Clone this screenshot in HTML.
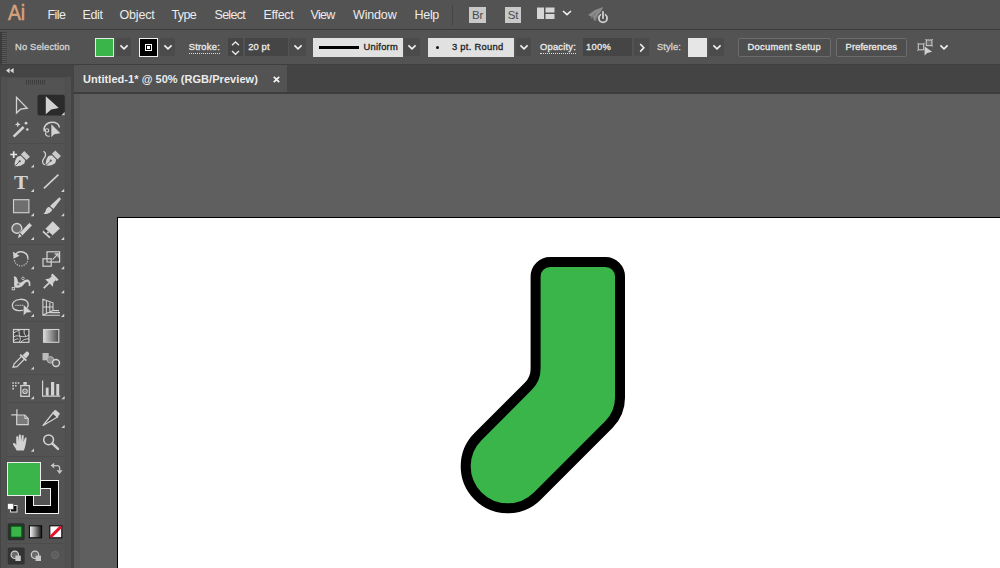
<!DOCTYPE html>
<html><head><meta charset="utf-8"><title>Untitled-1</title>
<style>
*{box-sizing:border-box;margin:0;padding:0}
html,body{width:1000px;height:568px;overflow:hidden;background:#5e5e5e;font-family:"Liberation Sans","DejaVu Sans",sans-serif;color:#e6e6e6}
.abs{position:absolute}
#menubar{position:absolute;left:0;top:0;width:1000px;height:30px;background:#535353;border-bottom:1px solid #3c3c3c}
#menubar .mi{position:absolute;top:6.6px;font-size:12.5px;line-height:16px;color:#ececec;white-space:nowrap}
#ctrl{position:absolute;left:0;top:30px;width:1000px;height:35px;background:#535353;border-bottom:1px solid #3f3f3f}
#ctrl .t{position:absolute;font-size:9.4px;line-height:12px;top:11px;white-space:nowrap;color:#ececec;-webkit-text-stroke:0.3px}
#ctrl .dk{position:absolute;top:8px;height:18px;background:#454545}
#ctrl .dd{position:absolute;top:8px;height:18px;background:#4b4b4b}
#ctrl .lt{position:absolute;top:8px;height:19px;background:#e1e1e1}
#ctrl .btn{position:absolute;top:8px;height:19px;background:#4e4e4e;border:1px solid #6c6c6c;border-radius:2px}
#tabrow{position:absolute;left:74px;top:65px;width:926px;height:29px;background:#444;border-bottom:2px solid #3d3d3d}
#tab{position:absolute;left:0;top:0;width:213px;height:27px;background:#535353}
#tools{position:absolute;left:0;top:65px;width:74px;height:503px;background:#535353;border-right:3px solid #444}
#toolhead{position:absolute;left:0;top:0;width:71px;height:12px;background:#454545}
#frame{position:absolute;left:74px;top:92px;width:6px;height:476px;background:#5a5a5a}
#paste{position:absolute;left:80px;top:94px;width:920px;height:474px;background:#5f5f5f}
#art{position:absolute;left:117px;top:217px;width:900px;height:400px;background:#fff;border:1px solid #000}
</style></head>
<body>
<div id="paste"></div>
<div id="frame"></div>
<div id="art"></div>
<svg class="abs" style="left:0;top:0" width="1000" height="568" viewBox="0 0 1000 568"><path d="M550.1 262 H605.5 A14.5 14.5 0 0 1 620 276.5 V397.7 A38 38 0 0 1 608.9 424.5 L537.4 496 A42 42 0 0 1 478 436.6 L528.3 386.3 A25 25 0 0 0 535.6 368.6 V276.5 A14.5 14.5 0 0 1 550.1 262 Z" fill="#39b54a" stroke="#000" stroke-width="10" stroke-linejoin="round"/></svg>
<div id="menubar">
<div class="mi" style="left:8.3px;top:1.2px;font-size:21.5px;line-height:24px;color:#d9a27a;-webkit-text-stroke:0.5px #d9a27a;transform:scaleX(0.9);transform-origin:0 0;letter-spacing:-0.3px">Ai</div>
<div class="mi" style="left:47.5px;letter-spacing:-0.54px">File</div>
<div class="mi" style="left:82.5px;letter-spacing:-0.39px">Edit</div>
<div class="mi" style="left:119.5px;letter-spacing:-0.19px">Object</div>
<div class="mi" style="left:171.5px;letter-spacing:-0.65px">Type</div>
<div class="mi" style="left:214.5px;letter-spacing:-0.71px">Select</div>
<div class="mi" style="left:263.5px;letter-spacing:-0.29px">Effect</div>
<div class="mi" style="left:310.5px;letter-spacing:-0.72px">View</div>
<div class="mi" style="left:353.0px;letter-spacing:-0.16px">Window</div>
<div class="mi" style="left:414.5px;letter-spacing:-0.30px">Help</div>
<div class="abs" style="left:452px;top:5px;width:1px;height:20px;background:#454545"></div>
<div class="abs" style="left:469px;top:7px;width:17px;height:16px;background:#c9c9c9;color:#4a4a4a;font-size:11.5px;line-height:16px;text-align:center;letter-spacing:-0.3px">Br</div>
<div class="abs" style="left:505px;top:7px;width:16px;height:16px;background:#c9c9c9;color:#4a4a4a;font-size:11.5px;line-height:16px;text-align:center;letter-spacing:-0.3px">St</div>
<svg class="abs" style="left:537px;top:7px" width="18" height="13" viewBox="0 0 18 13"><rect x="0" y="0.5" width="7" height="11.5" fill="#d6d6d6"/><rect x="8.5" y="0.5" width="9" height="5" fill="#d6d6d6"/><rect x="8.5" y="7" width="9" height="5" fill="#d6d6d6"/></svg>
<svg class="abs" style="left:562px;top:10px" width="10" height="6" viewBox="0 0 10 6"><path d="M1 1 L5 4.6 L9 1" fill="none" stroke="#f0f0f0" stroke-width="1.6"/></svg>
<svg class="abs" style="left:586px;top:6px" width="24" height="18" viewBox="0 0 24 18"><path d="M2 9 L9 4 L13 2.5 L17 1 L15.5 5 L11 10 L8 15 L7 11 L4 10 Z" fill="#8a8a8a"/><path d="M10 7 L5 12 M12 9 L9 15" stroke="#7a7a7a" stroke-width="1.5"/><circle cx="17" cy="12.2" r="4.1" fill="none" stroke="#d0d0d0" stroke-width="1.8"/><rect x="15.2" y="4.8" width="3.6" height="8.4" fill="#4c4c4c"/><rect x="16.1" y="5.2" width="1.8" height="7.6" fill="#d0d0d0"/></svg>
</div>
<div id="ctrl">
<div class="abs" style="left:0;top:2px;width:7px;height:32px;background:repeating-linear-gradient(180deg,#414141 0 1px,#585858 1px 2px)"></div><div class="abs" style="left:0;top:2px;width:2px;height:32px;background:rgba(40,40,40,.45)"></div>
<div class="t" style="left:15.0px;letter-spacing:0.15px;color:#d4d4d4">No Selection</div>
<div class="abs" style="left:95px;top:8px;width:19px;height:19px;background:#39b54a;border:1px solid #e8e8e8"></div>
<div class="dd" style="left:116px;width:15px"></div><svg class="abs" style="left:118.7px;top:14.0px" width="10" height="7" viewBox="0 0 10 7"><path d="M1.4 1.4 L5 4.8 L8.6 1.4" fill="none" stroke="#f2f2f2" stroke-width="1.6"/></svg>
<div class="abs" style="left:139px;top:8px;width:19px;height:19px;background:#000;border:1px solid #f0f0f0"></div>
<div class="abs" style="left:145px;top:14px;width:7px;height:7px;border:1px solid #fff;background:#000"></div><div class="abs" style="left:147px;top:16px;width:3px;height:3px;background:#fff"></div>
<div class="dd" style="left:160px;width:15px"></div><svg class="abs" style="left:162.5px;top:14.0px" width="10" height="7" viewBox="0 0 10 7"><path d="M1.4 1.4 L5 4.8 L8.6 1.4" fill="none" stroke="#f2f2f2" stroke-width="1.6"/></svg>
<div class="t" style="left:188.7px;letter-spacing:0.23px;border-bottom:1px dotted #ddd;height:13px">Stroke:</div>
<div class="dk" style="left:228px;width:15px"></div>
<svg class="abs" style="left:230px;top:10px" width="11" height="16" viewBox="0 0 11 16"><path d="M2 5.2 L5.5 2 L9 5.2 M2 11 L5.5 14.2 L9 11" fill="none" stroke="#e8e8e8" stroke-width="1.4"/></svg>
<div class="dk" style="left:245px;width:43px"></div>
<div class="t" style="left:248.3px;letter-spacing:0.09px;">20 pt</div>
<div class="dd" style="left:289px;width:17px"></div><svg class="abs" style="left:292.6px;top:14.0px" width="10" height="7" viewBox="0 0 10 7"><path d="M1.4 1.4 L5 4.8 L8.6 1.4" fill="none" stroke="#f2f2f2" stroke-width="1.6"/></svg>
<div class="lt" style="left:313px;width:90px"></div>
<div class="abs" style="left:319px;top:16px;width:40px;height:3px;background:#000"></div>
<div class="t" style="left:363.5px;letter-spacing:0.24px;color:#1e1e1e">Uniform</div>
<div class="dd" style="left:404px;width:16px"></div><svg class="abs" style="left:407.0px;top:14.0px" width="10" height="7" viewBox="0 0 10 7"><path d="M1.4 1.4 L5 4.8 L8.6 1.4" fill="none" stroke="#f2f2f2" stroke-width="1.6"/></svg>
<div class="lt" style="left:428px;width:86px"></div>
<div class="abs" style="left:436px;top:16px;width:3px;height:3px;background:#111;border-radius:1.5px"></div>
<div class="t" style="left:452.0px;letter-spacing:0.27px;color:#1e1e1e">3 pt. Round</div>
<div class="dd" style="left:516px;width:15px"></div><svg class="abs" style="left:518.5px;top:14.0px" width="10" height="7" viewBox="0 0 10 7"><path d="M1.4 1.4 L5 4.8 L8.6 1.4" fill="none" stroke="#f2f2f2" stroke-width="1.6"/></svg>
<div class="t" style="left:540.0px;letter-spacing:0.20px;border-bottom:1px dotted #ddd;height:13px">Opacity:</div>
<div class="dk" style="left:583px;width:49px"></div>
<div class="t" style="left:586.0px;letter-spacing:0.25px;">100%</div>
<div class="dd" style="left:634px;width:15px"></div>
<svg class="abs" style="left:638.5px;top:13px" width="7" height="10" viewBox="0 0 7 10"><path d="M1.2 1 L4.8 4.8 L1.2 8.6" fill="none" stroke="#f0f0f0" stroke-width="1.6"/></svg>
<div class="t" style="left:657.0px;letter-spacing:0.09px;color:#d4d4d4">Style:</div>
<div class="lt" style="left:688px;width:19px;background:#e6e6e6"></div>
<div class="dd" style="left:709px;width:15px"></div><svg class="abs" style="left:711.5px;top:14.0px" width="10" height="7" viewBox="0 0 10 7"><path d="M1.4 1.4 L5 4.8 L8.6 1.4" fill="none" stroke="#f2f2f2" stroke-width="1.6"/></svg>
<div class="btn" style="left:738px;width:93px"></div>
<div class="t" style="left:747.5px;letter-spacing:0.26px;">Document Setup</div>
<div class="btn" style="left:836px;width:71px"></div>
<div class="t" style="left:845.6px;letter-spacing:0.08px;">Preferences</div>
<svg class="abs" style="left:917px;top:9px" width="17" height="17" viewBox="0 0 17 17"><rect x="1.3" y="5" width="5.4" height="5.8" fill="none" stroke="#c4c4c4" stroke-width="1.1"/><rect x="9.3" y="1" width="5.6" height="5.6" fill="#6a6a6a" stroke="#c8c8c8" stroke-width="1.1"/><path d="M0.3 4 L2 5.6 M7.8 4 L6 5.6 M0.3 11.8 L2 10.2 M8.2 0 L9.8 1.5 M16 0 L14.4 1.5 M16 7.6 L14.4 6.2" stroke="#bdbdbd" stroke-width="0.9"/><path d="M7.6 7.6 L7.6 16.6 L10.2 14 L15.2 12.8 Z" fill="#d0d0d0"/></svg>
<svg class="abs" style="left:938.8px;top:14.0px" width="10" height="7" viewBox="0 0 10 7"><path d="M1.4 1.4 L5 4.8 L8.6 1.4" fill="none" stroke="#f2f2f2" stroke-width="1.6"/></svg>
</div>
<div id="tabrow"><div id="tab"><div class="abs" style="left:9px;top:8px;font-size:11px;line-height:13px;font-weight:bold;color:#ececec;white-space:nowrap;letter-spacing:0.05px">Untitled-1* @ 50% (RGB/Preview)</div>
<svg class="abs" style="left:199.3px;top:10.6px" width="7" height="7" viewBox="0 0 7 7"><path d="M0.8 0.8 L6.2 6.2 M6.2 0.8 L0.8 6.2" stroke="#f4f4f4" stroke-width="1.7"/></svg></div></div>
<div id="tools"><div id="toolhead"></div></div>
<svg class="abs" style="left:0;top:0" width="74" height="568" viewBox="0 0 74 568">
<rect x="0" y="77" width="71" height="491" fill="#505050"/><rect x="6.5" y="77.5" width="59" height="495" fill="#535353" stroke="#4c4c4c" stroke-width="1"/><rect x="0" y="65" width="1" height="503" fill="#444"/>
<path d="M7 143.5 H65 M7 244.5 H65 M7 321.5 H65 M7 374.5 H65 M7 402.5 H65 M7 456.5 H65 M7 518.5 H65 M7 543.5 H65" stroke="#4c4c4c" stroke-width="1"/>
<path d="M9.6 68 L6 70.6 L9.6 73.2 Z M13.6 68 L10 70.6 L13.6 73.2 Z" fill="#dcdcdc"/>
<path d="M26.5 80 V84.6 M28.5 80 V84.6 M30.5 80 V84.6 M32.5 80 V84.6 M34.5 80 V84.6 M36.5 80 V84.6 M38.5 80 V84.6 M40.5 80 V84.6 M42.5 80 V84.6 M44.5 80 V84.6" stroke="#3d3d3d" stroke-width="1"/>
<path d="M16.5 97.4 L16.5 113 L20.6 109.2 L27.2 108.2 Z" fill="none" stroke="#d2d2d2" stroke-width="1.3"/>
<rect x="37.5" y="94.7" width="27.3" height="20.8" rx="2" fill="#2b2b2b"/>
<path d="M45.8 96.3 L45.8 114.2 L51.2 109.4 L58.8 108 Z" fill="#d2d2d2"/>
<path d="M64.6 112.0 V115.2 H61.4 Z" fill="#d2d2d2"/>
<path d="M13.6 136.6 L23.6 127" stroke="#d2d2d2" stroke-width="2.6"/>
<path d="M17.8 121.4 L18.7 123.5 L20.8 124.4 L18.7 125.3 L17.8 127.4 L16.9 125.3 L14.8 124.4 L16.9 123.5 Z" fill="#d2d2d2"/>
<circle cx="26" cy="123.2" r="1.4" fill="#d2d2d2"/>
<circle cx="27.3" cy="129.5" r="1.3" fill="#d2d2d2"/>
<path d="M44.4 131.5 C42.8 127 46.5 122.3 52 122.3 C56.2 122.3 59.4 124.2 59.3 127.4" fill="none" stroke="#d2d2d2" stroke-width="1.4"/>
<circle cx="47" cy="130.4" r="1.7" fill="none" stroke="#d2d2d2" stroke-width="1.1"/>
<path d="M45.6 132.6 C45 134.8 46.6 136.6 49.6 136.2" fill="none" stroke="#d2d2d2" stroke-width="1.2"/>
<path d="M51 123.6 L51 137.8 L54.3 134.6 L61 133.5 Z" fill="#d2d2d2" stroke="#484848" stroke-width="0.6"/>
<path d="M13.7 151.2 V157.9 M10.3 154.5 H17.1" stroke="#e6e6e6" stroke-width="1.7"/>
<path d="M14.80 166.20 L14.66 163.23 L15.51 159.84 L17.42 156.65 L20.81 155.81 L25.19 160.19 L24.35 163.58 L21.16 165.49 L17.77 166.34 Z" fill="#d2d2d2"/><path d="M15.15 165.85 L19.04 161.96" stroke="#555" stroke-width="0.9"/><circle cx="19.75" cy="161.25" r="1.1" fill="#555"/><path d="M20.88 154.46 L26.54 160.12 L29.93 156.72 L24.28 151.07 Z" fill="#cbcbcb"/>
<path d="M34.0 164.4 V167.6 H30.8 Z" fill="#d2d2d2"/>
<path d="M43.5 151.3 C46.3 153 46 155.8 44.3 157.8 C42.3 160.3 41.6 163.2 44.8 164.8" fill="none" stroke="#d2d2d2" stroke-width="1.3"/>
<path d="M45.80 165.60 L45.66 162.63 L46.51 159.24 L48.42 156.05 L51.81 155.21 L56.19 159.59 L55.35 162.98 L52.16 164.89 L48.77 165.74 Z" fill="#d2d2d2"/><path d="M46.15 165.25 L50.04 161.36" stroke="#555" stroke-width="0.9"/><circle cx="50.75" cy="160.65" r="1.1" fill="#555"/><path d="M51.88 153.86 L57.54 159.52 L60.93 156.12 L55.28 150.47 Z" fill="#cbcbcb"/>
<text x="21.1" y="188.7" font-family="Liberation Serif,serif" font-weight="bold" font-size="19.5" text-anchor="middle" fill="#d2d2d2" transform="translate(21.1 0) scale(1.08 1) translate(-21.1 0)">T</text>
<path d="M34.0 188.8 V192.0 H30.8 Z" fill="#d2d2d2"/>
<path d="M43.9 188.4 L58.4 174.6" stroke="#d2d2d2" stroke-width="1.6"/>
<path d="M64.2 188.8 V192.0 H61.0 Z" fill="#d2d2d2"/>
<rect x="13.5" y="199.7" width="15.4" height="13" fill="#6f6f6f" stroke="#d2d2d2" stroke-width="1.1"/>
<path d="M34.0 213.0 V216.2 H30.8 Z" fill="#d2d2d2"/>
<path d="M59.4 197.3 L61 198.9 L53.4 209 L50 205.9 Z" fill="#d2d2d2"/>
<path d="M49.4 207 L52.2 209.6 C51.6 212.6 47.6 214.6 43.2 214 C45.4 212.8 45.6 210.9 46.2 209.3 C46.9 207.6 48.3 207 49.4 207 Z" fill="#d2d2d2"/>
<path d="M64.2 213.0 V216.2 H61.0 Z" fill="#d2d2d2"/>
<circle cx="16.9" cy="228.4" r="4.9" fill="#6c6c6c" stroke="#d2d2d2" stroke-width="1.4"/>
<path d="M29.3 222.6 L32.2 225.5 L22.6 235.6 L19.6 232.7 Z" fill="#d2d2d2" stroke="#535353" stroke-width="0.7"/><path d="M19.2 233.5 L21.8 236.1 L17.8 238.2 Z" fill="#d2d2d2"/>
<path d="M34.0 236.8 V240.0 H30.8 Z" fill="#d2d2d2"/>
<path d="M52.8 221.3 L59.9 228.4 L49.3 238.2 L42.3 231.9 Z" fill="#d2d2d2"/>
<path d="M45.45 228.72 L52.48 235.26 L50.57 237.02 L43.56 230.63 Z" fill="#454545"/>
<rect x="47" y="231.6" width="1.8" height="1.8" fill="#d2d2d2" transform="rotate(42 47.9 232.5)"/>
<path d="M64.2 236.8 V240.0 H61.0 Z" fill="#d2d2d2"/>
<path d="M15 255.6 A6.8 6.8 0 0 1 27.9 258.7" fill="none" stroke="#d2d2d2" stroke-width="1.4"/>
<path d="M27.9 258.7 A6.8 6.8 0 0 1 14.3 259.5" fill="none" stroke="#b5b5b5" stroke-width="1.3" stroke-dasharray="1.3 1.1"/>
<path d="M13 251.8 L13.5 258.8 L19.6 255.8 Z" fill="#d2d2d2"/>
<path d="M34.0 266.0 V269.2 H30.8 Z" fill="#d2d2d2"/>
<rect x="47" y="251.8" width="12.6" height="10.2" fill="none" stroke="#d2d2d2" stroke-width="1.2"/>
<rect x="43" y="258.8" width="8.2" height="7.4" fill="none" stroke="#d2d2d2" stroke-width="1.2"/>
<path d="M52.6 259.6 L57.6 254.4 M54.6 253.8 H58.2 V257.4" fill="none" stroke="#d2d2d2" stroke-width="1.2"/>
<path d="M64.2 266.0 V269.2 H61.0 Z" fill="#d2d2d2"/>
<path d="M13.8 276.4 C16 276 17.6 278.4 17.7 281 C18 283 20 283.4 22 282 C24 280.2 26.4 278.8 28.4 279.8 C30.6 281.2 30.8 284 30.2 286.2 L28.6 285.8 C29 283.6 28.6 282 27.2 281.8 C25.6 281.8 24.4 284 22.4 286 C20 288 15.4 288.6 14.4 286.4 C13.6 284 14.8 280 13.8 276.4 Z" fill="#d2d2d2"/>
<rect x="12.2" y="287.4" width="2.4" height="2.4" fill="#535353" stroke="#d2d2d2" stroke-width="0.9"/>
<circle cx="18.2" cy="284.2" r="1.3" fill="#535353" stroke="#d2d2d2" stroke-width="0.8"/><circle cx="23" cy="278.4" r="1.3" fill="#535353" stroke="#d2d2d2" stroke-width="0.8"/>
<path d="M34.0 290.0 V293.2 H30.8 Z" fill="#d2d2d2"/>
<g transform="translate(48.6 283.4) rotate(45)" fill="#d2d2d2"><rect x="-4.2" y="-9.8" width="8.4" height="2.4"/><rect x="-2.8" y="-7.6" width="5.6" height="4"/><path d="M-2.8 -4 L-5.4 -0.6 H5.4 L2.8 -4 Z"/><rect x="-0.9" y="-0.8" width="1.8" height="7.6"/></g>
<path d="M64.2 290.0 V293.2 H61.0 Z" fill="#d2d2d2"/>
<path d="M14 301.6 C17 298.6 24 298.6 26.6 301 C29 303.4 28.6 307 26 309 C22 311.6 14.6 311 12.9 307.6 C11.9 305 12.6 303 14 301.6 Z" fill="none" stroke="#d2d2d2" stroke-width="1.3"/>
<path d="M15.4 305.3 H23" stroke="#d2d2d2" stroke-width="1.2" stroke-dasharray="1.1 1"/>
<path d="M23.4 304.4 L23.4 315.8 L26.6 312.8 L32 312.2 Z" fill="#d2d2d2" stroke="#535353" stroke-width="0.5"/>
<path d="M34.0 313.8 V317.0 H30.8 Z" fill="#d2d2d2"/>
<path d="M42.9 299.3 L53 302.8 V310.6 L42.9 315 Z M46.4 300.5 V313.5 M49.8 301.7 V312 M42.9 307 L53 306.7 M42.9 315.2 H60 M53 310.6 H59 M49.8 312.6 H60" fill="none" stroke="#d2d2d2" stroke-width="1.1"/>
<path d="M64.2 313.8 V317.0 H61.0 Z" fill="#d2d2d2"/>
<rect x="13.5" y="329.5" width="15.4" height="12.8" fill="#444" stroke="#d2d2d2" stroke-width="1.2"/>
<path d="M13.5 337 C18 333.5 23 339.5 29 335 M19.5 329.7 C17.5 334 22.5 338 19 342.3 M13.5 333 C16 331.5 17.5 331 19 329.9 M21 342 C23 339.5 26.5 338.5 29 339 M24.5 329.7 C23 333 25.5 335 26 337 M14 340.5 C15.5 339 17 338.8 18.5 339" fill="none" stroke="#d2d2d2" stroke-width="1"/>
<defs><linearGradient id="g1" x1="0" x2="1" y1="0" y2="0"><stop offset="0" stop-color="#dcdcdc"/><stop offset="1" stop-color="#484848"/></linearGradient><linearGradient id="g2" x1="0" x2="1" y1="0" y2="0"><stop offset="0" stop-color="#fff"/><stop offset="1" stop-color="#111"/></linearGradient></defs>
<rect x="43.5" y="329.5" width="15.3" height="12.8" fill="url(#g1)" stroke="#d2d2d2" stroke-width="1.1"/>
<path d="M13 367.2 L14.2 363.8 L21.8 356.2 L24.6 359 L17 366.6 Z" fill="none" stroke="#d2d2d2" stroke-width="1.2"/>
<path d="M20.2 354.6 L26.3 360.7" stroke="#d2d2d2" stroke-width="1.9"/>
<path d="M22.6 355.2 L26 351.9 C27.6 350.8 29.9 352.9 28.8 354.9 L25.9 358.4 Z" fill="#d2d2d2"/>
<path d="M34.0 366.4 V369.6 H30.8 Z" fill="#d2d2d2"/>
<rect x="42.5" y="353" width="6.2" height="7.3" fill="#bcbcbc"/>
<circle cx="50.4" cy="359.8" r="3.3" fill="#8c8c8c" stroke="#bdbdbd" stroke-width="0.9"/>
<circle cx="56" cy="363" r="3.5" fill="#5a5a5a" stroke="#d2d2d2" stroke-width="1.4"/>
<rect x="20.8" y="385.6" width="8.5" height="10.7" fill="none" stroke="#d2d2d2" stroke-width="1.3"/>
<circle cx="25" cy="391.2" r="2.2" fill="none" stroke="#d2d2d2" stroke-width="1.2"/><circle cx="25" cy="391.2" r="0.7" fill="#d2d2d2"/>
<rect x="23.3" y="382" width="3.5" height="2.8" fill="#d2d2d2"/>
<path d="M12.3 382.2 h1.6 v1.6 h-1.6 Z M15 382.2 h1.6 v1.6 h-1.6 Z M17.7 382.2 h1.6 v1.6 h-1.6 Z M12.3 385 h1.6 v1.6 h-1.6 Z M15 385 h1.6 v1.6 h-1.6 Z M12.3 387.8 h1.6 v1.6 h-1.6 Z" fill="#d2d2d2"/>
<path d="M34.0 396.0 V399.2 H30.8 Z" fill="#d2d2d2"/>
<path d="M42.6 380.6 V396.2 H60.2" fill="none" stroke="#d2d2d2" stroke-width="1.2"/>
<rect x="45.8" y="387.6" width="2.8" height="8" fill="#d2d2d2"/><rect x="51" y="382" width="3.2" height="13.6" fill="#d2d2d2"/><rect x="56.3" y="384" width="2.9" height="11.6" fill="#d2d2d2"/>
<path d="M64.6 396.0 V399.2 H61.4 Z" fill="#d2d2d2"/>
<path d="M16.9 409.2 V415 M11.3 414.9 H17" stroke="#d2d2d2" stroke-width="1.2"/>
<path d="M16.7 415 H24.8 L28.2 418.4 V424.6 H16.7 Z" fill="#7a7a7a" stroke="#d2d2d2" stroke-width="1.2"/>
<path d="M24.8 415 V418.4 H28.2" fill="none" stroke="#d2d2d2" stroke-width="1"/>
<path d="M42.7 425.8 L53 413 L57.4 417 Z" fill="#484848" stroke="#d2d2d2" stroke-width="1.3"/>
<path d="M54.4 410.2 L55.8 409.9 L59.9 413.6 L57.6 417.6 L52.4 413 Z" fill="#d2d2d2"/>
<path d="M64.6 424.8 V428.0 H61.4 Z" fill="#d2d2d2"/>
<path d="M16.6 450.4 C15.2 447.4 13.2 445.4 12.8 443.8 C13.4 442.4 15 443 16.3 444.9 L16.2 437.2 C16.2 435.8 18.2 435.8 18.3 437.2 L18.6 441.6 L18.8 435.5 C18.9 434.1 20.9 434.1 20.9 435.5 L21.1 441.4 L21.7 436 C21.9 434.7 23.8 434.9 23.7 436.2 L23.5 441.9 L24.7 438.2 C25.1 437 26.9 437.5 26.6 438.8 L25.6 444.6 C25.3 446.6 24.6 448.6 23.9 450.4 Z" fill="#d2d2d2"/>
<path d="M34.0 448.6 V451.8 H30.8 Z" fill="#d2d2d2"/>
<circle cx="48.6" cy="439.8" r="4.9" fill="none" stroke="#d2d2d2" stroke-width="1.5"/>
<path d="M52.4 443.7 L58 448.8" stroke="#d2d2d2" stroke-width="2.5" stroke-linecap="round"/>
<rect x="25.5" y="480.5" width="33" height="33" fill="#000" stroke="#f2f2f2" stroke-width="1"/>
<rect x="33.5" y="488.5" width="17" height="17" fill="#535353" stroke="#f2f2f2" stroke-width="1"/>
<rect x="7.5" y="462.5" width="33" height="33" fill="#39b54a" stroke="#ececec" stroke-width="1"/>
<path d="M54 465.6 H57.4 A2.2 2.2 0 0 1 59.6 467.8 V470.6" fill="none" stroke="#c4c4c4" stroke-width="1.3"/>
<path d="M50.6 465.6 L54.2 462.8 V468.4 Z M59.6 474 L56.6 470.2 H62.6 Z" fill="#c4c4c4"/>
<rect x="10.5" y="505.5" width="6.5" height="6.5" fill="#111" stroke="#e0e0e0" stroke-width="1"/>
<rect x="7.7" y="503.6" width="5.8" height="5.6" fill="#fff" stroke="#535353" stroke-width="0.6"/>
<rect x="7.7" y="523.2" width="17" height="17" rx="1.5" fill="#2e2e2e"/>
<rect x="10.6" y="526" width="11.4" height="11.4" fill="#39b54a" stroke="#0f4a1a" stroke-width="1.4"/>
<rect x="29.4" y="525.8" width="12.2" height="12" fill="url(#g2)" stroke="#0a0a0a" stroke-width="1.1"/>
<rect x="49.8" y="525.8" width="12" height="12" fill="#fff" stroke="#0a0a0a" stroke-width="1.1"/>
<path d="M50.6 537 L61 526.6" stroke="#e8112a" stroke-width="3"/>
<rect x="7.7" y="547.6" width="17" height="17" rx="1.5" fill="#333"/>
<g opacity="1"><circle cx="14.8" cy="554.8" r="3.7" fill="#6a6a6a" stroke="#cfcfcf" stroke-width="1.2"/><rect x="15.4" y="555.6" width="5.4" height="5.4" fill="#c8c8c8"/></g>
<g opacity="1"><circle cx="35.0" cy="554.8" r="3.7" fill="#6a6a6a" stroke="#cfcfcf" stroke-width="1.2"/><rect x="35.6" y="555.6" width="5.4" height="5.4" fill="#c8c8c8"/></g>
<circle cx="55" cy="555" r="3.6" fill="#5f5f5f" stroke="#666" stroke-width="1.2"/>
</svg>
</body></html>
